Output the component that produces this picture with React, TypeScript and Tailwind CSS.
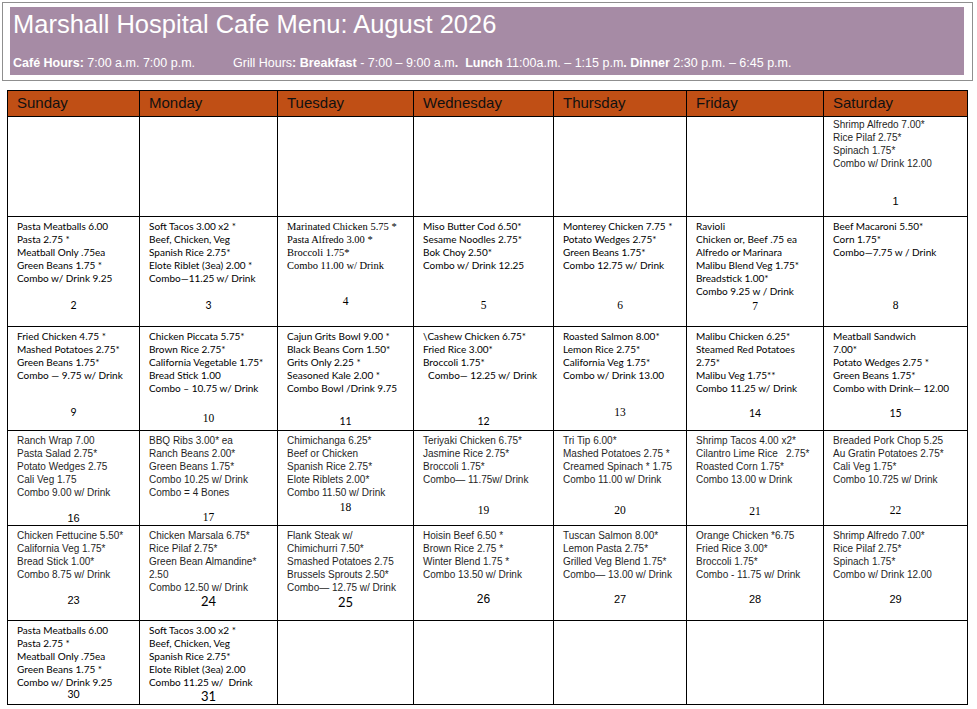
import React from 'react';

type Font = 'c' | 'a' | 's';
type NumFont = 'c' | 'cl' | 'a' | 'al' | 's';

interface Cell {
  lines?: string[];
  font?: Font;
  num?: string;
  numFont?: NumFont;
  mt?: string;
  pt?: string;
}

const DAYS = ['Sunday', 'Monday', 'Tuesday', 'Wednesday', 'Thursday', 'Friday', 'Saturday'];

const fontCls: Record<Font, string> = {
  c: "font-['Lato',sans-serif] text-[10px] text-black",
  a: "font-['Liberation_Sans',Arial,sans-serif] text-[10px] text-[#1f1f1f]",
  s: "font-['Liberation_Serif','Times_New_Roman',serif] text-[10.5px] text-black",
};

const numCls: Record<NumFont, string> = {
  c: "font-['Lato',sans-serif] text-[10.5px]",
  cl: "font-['Lato',sans-serif] text-[13px]",
  a: "font-['Liberation_Sans',Arial,sans-serif] text-[11px]",
  al: "font-['Liberation_Sans',Arial,sans-serif] text-[12px]",
  s: "font-['Liberation_Serif','Times_New_Roman',serif] text-[11.5px]",
};

// weeks of August 2026, one array per calendar row
const WEEKS: Cell[][] = [
  [
    {}, {}, {}, {}, {}, {},
    {
      lines: ['Shrimp Alfredo 7.00*', 'Rice Pilaf 2.75*', 'Spinach 1.75*', 'Combo w/ Drink 12.00'],
      font: 'a', num: '1', numFont: 'a', mt: 'mt-[24px]', pt: 'pt-[1px]',
    },
  ],
  [
    { lines: ['Pasta Meatballs 6.00', 'Pasta 2.75 *', 'Meatball Only .75ea', 'Green Beans 1.75 *', 'Combo w/ Drink 9.25'], font: 'c', num: '2', numFont: 'c', mt: 'mt-[13px]' },
    { lines: ['Soft Tacos 3.00 x2 *', 'Beef, Chicken, Veg', 'Spanish Rice 2.75*', 'Elote Riblet (3ea) 2.00 *', 'Combo\u201411.25 w/ Drink'], font: 'c', num: '3', numFont: 'c', mt: 'mt-[13px]' },
    { lines: ['Marinated Chicken 5.75 *', 'Pasta Alfredo 3.00 *', 'Broccoli 1.75*', 'Combo 11.00 w/ Drink'], font: 's', num: '4', numFont: 's', mt: 'mt-[22px]' },
    { lines: ['Miso Butter Cod 6.50*', 'Sesame Noodles 2.75*', 'Bok Choy 2.50*', 'Combo w/ Drink 12.25'], font: 'c', num: '5', numFont: 's', mt: 'mt-[26px]' },
    { lines: ['Monterey Chicken 7.75 *', 'Potato Wedges 2.75*', 'Green Beans 1.75*', 'Combo 12.75 w/ Drink'], font: 'c', num: '6', numFont: 's', mt: 'mt-[26px]' },
    { lines: ['Ravioli', 'Chicken or, Beef .75 ea', 'Alfredo or Marinara', 'Malibu Blend Veg 1.75*', 'Breadstick 1.00*', 'Combo 9.25 w / Drink'], font: 'c', num: '7', numFont: 's', mt: 'mt-[1px]' },
    { lines: ['Beef Macaroni 5.50*', 'Corn 1.75*', 'Combo\u20147.75 w / Drink'], font: 'c', num: '8', numFont: 's', mt: 'mt-[39px]' },
  ],
  [
    { lines: ['Fried Chicken 4.75 *', 'Mashed Potatoes 2.75*', 'Green Beans 1.75*', 'Combo \u2014 9.75 w/ Drink'], font: 'c', num: '9', numFont: 'c', mt: 'mt-[23px]' },
    { lines: ['Chicken Piccata 5.75*', 'Brown Rice 2.75*', 'California Vegetable 1.75*', 'Bread Stick 1.00', 'Combo \u2013 10.75 w/ Drink'], font: 'c', num: '10', numFont: 's', mt: 'mt-[16px]' },
    { lines: ['Cajun Grits Bowl 9.00 *', 'Black Beans Corn 1.50*', 'Grits Only 2.25 *', 'Seasoned Kale 2.00 *', 'Combo Bowl /Drink 9.75'], font: 'c', num: '11', numFont: 'c', mt: 'mt-[19px]' },
    { lines: ['\\Cashew Chicken 6.75*', 'Fried Rice 3.00*', 'Broccoli 1.75*', '  Combo\u2014 12.25 w/ Drink'], font: 'c', num: '12', numFont: 'c', mt: 'mt-[32px]' },
    { lines: ['Roasted Salmon 8.00*', 'Lemon Rice 2.75*', 'California Veg 1.75*', 'Combo w/ Drink 13.00'], font: 'c', num: '13', numFont: 's', mt: 'mt-[23px]' },
    { lines: ['Malibu Chicken 6.25*', 'Steamed Red Potatoes', '2.75*', 'Malibu Veg 1.75**', 'Combo 11.25 w/ Drink'], font: 'c', num: '14', numFont: 'c', mt: 'mt-[11px]' },
    { lines: ['Meatball Sandwich', '7.00*', 'Potato Wedges 2.75 *', 'Green Beans 1.75*', 'Combo with Drink\u2014 12.00'], font: 'c', num: '15', numFont: 'c', mt: 'mt-[11px]' },
  ],
  [
    { lines: ['Ranch Wrap 7.00', 'Pasta Salad 2.75*', 'Potato Wedges 2.75', 'Cali Veg 1.75', 'Combo 9.00 w/ Drink'], font: 'a', num: '16', numFont: 'a', mt: 'mt-[12px]' },
    { lines: ['BBQ Ribs 3.00* ea', 'Ranch Beans 2.00*', 'Green Beans 1.75*', 'Combo 10.25 w/ Drink', 'Combo = 4 Bones'], font: 'a', num: '17', numFont: 's', mt: 'mt-[11px]' },
    { lines: ['Chimichanga 6.25*', 'Beef or Chicken', 'Spanish Rice 2.75*', 'Elote Riblets 2.00*', 'Combo 11.50 w/ Drink'], font: 'a', num: '18', numFont: 's', mt: 'mt-[1px]' },
    { lines: ['Teriyaki Chicken 6.75*', 'Jasmine Rice 2.75*', 'Broccoli 1.75*', 'Combo\u2014 11.75w/ Drink'], font: 'a', num: '19', numFont: 's', mt: 'mt-[17px]' },
    { lines: ['Tri Tip 6.00*', 'Mashed Potatoes 2.75 *', 'Creamed Spinach * 1.75', 'Combo 11.00 w/ Drink'], font: 'a', num: '20', numFont: 's', mt: 'mt-[17px]' },
    { lines: ['Shrimp Tacos 4.00 x2*', 'Cilantro Lime Rice   2.75*', 'Roasted Corn 1.75*', 'Combo 13.00 w Drink'], font: 'a', num: '21', numFont: 's', mt: 'mt-[18px]' },
    { lines: ['Breaded Pork Chop 5.25', 'Au Gratin Potatoes 2.75*', 'Cali Veg 1.75*', 'Combo 10.725 w/ Drink'], font: 'a', num: '22', numFont: 's', mt: 'mt-[17px]' },
  ],
  [
    { lines: ['Chicken Fettucine 5.50*', 'California Veg 1.75*', 'Bread Stick 1.00*', 'Combo 8.75 w/ Drink'], font: 'a', num: '23', numFont: 'a', mt: 'mt-[12px]' },
    { lines: ['Chicken Marsala 6.75*', 'Rice Pilaf 2.75*', 'Green Bean Almandine*', '2.50', 'Combo 12.50 w/ Drink'], font: 'a', num: '24', numFont: 'cl', mt: 'mt-0' },
    { lines: ['Flank Steak w/', 'Chimichurri 7.50*', 'Smashed Potatoes 2.75', 'Brussels Sprouts 2.50*', 'Combo\u2014 12.75 w/ Drink'], font: 'a', num: '25', numFont: 'cl', mt: 'mt-[1px]' },
    { lines: ['Hoisin Beef 6.50 *', 'Brown Rice 2.75 *', 'Winter Blend 1.75 *', 'Combo 13.50 w/ Drink'], font: 'a', num: '26', numFont: 'al', mt: 'mt-[11px]' },
    { lines: ['Tuscan Salmon 8.00*', 'Lemon Pasta 2.75*', 'Grilled Veg Blend 1.75*', 'Combo\u2014 13.00 w/ Drink'], font: 'a', num: '27', numFont: 'a', mt: 'mt-[11px]' },
    { lines: ['Orange Chicken *6.75', 'Fried Rice 3.00*', 'Broccoli 1.75*', 'Combo - 11.75 w/ Drink'], font: 'a', num: '28', numFont: 'a', mt: 'mt-[11px]' },
    { lines: ['Shrimp Alfredo 7.00*', 'Rice Pilaf 2.75*', 'Spinach 1.75*', 'Combo w/ Drink 12.00'], font: 'a', num: '29', numFont: 'a', mt: 'mt-[11px]' },
  ],
  [
    { lines: ['Pasta Meatballs 6.00', 'Pasta 2.75 *', 'Meatball Only .75ea', 'Green Beans 1.75 *', 'Combo w/ Drink 9.25'], font: 'c', num: '30', numFont: 'c', mt: '-mt-[2px]' },
    { lines: ['Soft Tacos 3.00 x2 *', 'Beef, Chicken, Veg', 'Spanish Rice 2.75*', 'Elote Riblet (3ea) 2.00', 'Combo 11.25 w/  Drink'], font: 'c', num: '31', numFont: 'cl', mt: 'mt-0' },
    {}, {}, {}, {}, {},
  ],
];

function DayCell({ cell }: { cell: Cell }) {
  if (!cell.lines) return <div className="border-r border-b border-black" />;
  return (
    <div className={`border-r border-b border-black pl-[9px] pr-1 flex flex-col ${cell.pt ?? 'pt-[3px]'}`}>
      <div className={`leading-[13px] whitespace-pre ${fontCls[cell.font ?? 'c']}`}>
        {cell.lines.map((l, i) => (
          <div key={i}>{l}</div>
        ))}
      </div>
      {cell.num && (
        <div className={`text-center leading-[14px] text-black pr-[5px] ${numCls[cell.numFont ?? 'c']} ${cell.mt}`}>
          {cell.num}
        </div>
      )}
    </div>
  );
}

export default function App() {
  return (
    <div className="w-[977px] h-[709px] bg-white relative font-['Liberation_Sans',Arial,sans-serif]">
      <div className="pt-[2px] pl-[2px]">
        {/* title banner */}
        <div className="w-[971px] h-[79px] border border-[#8f8f8f] pt-[4px] pl-[7px]">
          <div className="w-[954px] h-[68px] bg-[#a68ba5] pl-[3px] text-white">
            <div className="text-[25.5px] leading-[30px] pt-[2px]">Marshall Hospital Cafe Menu: August 2026</div>
            <div className="text-[12.5px] leading-[16px] mt-[16px] whitespace-pre">
              <b>Café Hours:</b> 7:00 a.m. 7:00 p.m.
              <span className="ml-[38px]">
                Grill Hours<b>:</b> <b>Breakfast</b> - 7:00 – 9:00 a.m<b>.</b>  <b>Lunch</b> 11:00a.m. – 1:15 p.m<b>.</b> <b>Dinner</b> 2:30 p.m. – 6:45 p.m.
              </span>
            </div>
          </div>
        </div>
      </div>

      {/* calendar */}
      <div className="ml-[7px] mt-[9px] w-[961px] border-t border-l border-black grid grid-cols-[132px_138px_136px_140px_133px_137px_144px] grid-rows-[26px_100px_110px_104px_95px_95px_84px]">
        {DAYS.map((d) => (
          <div
            key={d}
            className="bg-[#c04f15] border-r border-b border-black pl-[9px] flex items-center text-[15px] text-[#111]"
          >
            {d}
          </div>
        ))}
        {WEEKS.flatMap((week, wi) => week.map((cell, ci) => <DayCell key={`${wi}-${ci}`} cell={cell} />))}
      </div>
    </div>
  );
}
